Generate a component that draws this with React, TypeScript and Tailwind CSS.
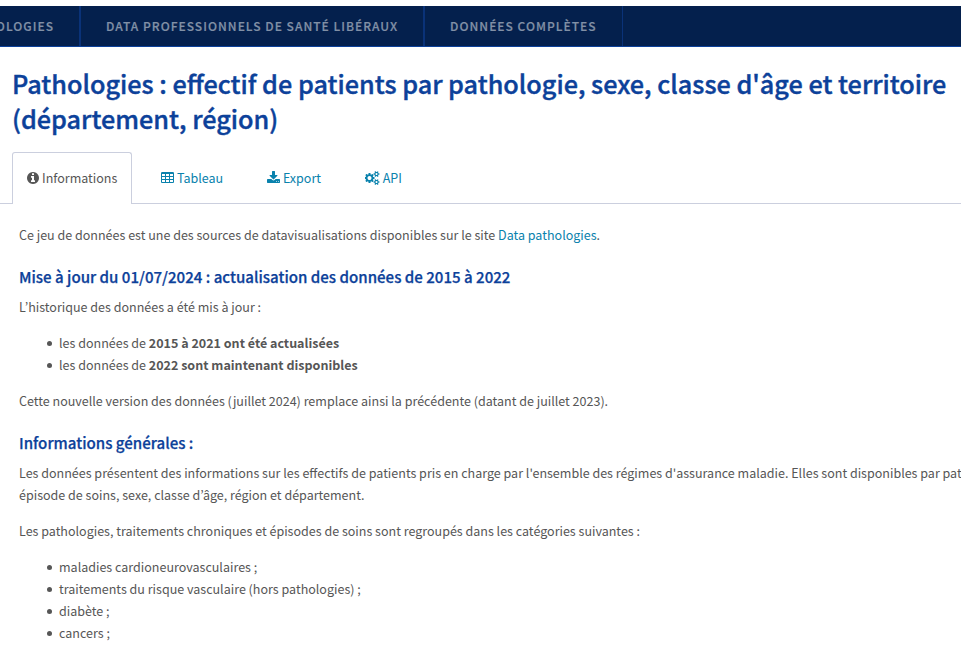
import React from "react";

const gear =
  "v140q0 16-149 31-12 27-30 52 51 113 51 138 0 4-4 7-122 71-124 71-8 0-46-47t-52-68q-20 2-30 2t-30-2q-14 21-52 68t-46 47q-2 0-124-71-4-3-4-7 0-25 51-138-18-25-30-52-149-15-149-31v-140q0-16 149-31 13-29 30-52-51-113-51-138 0-4 4-7 4-2 35-20t59-34 30-16q8 0 46 46.5t52 67.5q20-2 30-2t30 2q51-71 92-112l6-2q4 0 124 70 4 3 4 7 0 25-51 138 17 23 30 52 149 15 149 31z";

const cell =
  "v-192q0-14-9-23t-23-9h-320q-14 0-23 9t-9 23v192q0 14 9 23t23 9h320q14 0 23-9t9-23z";

const icons = {
  info: {
    width: 12,
    box: "0 0 1536 1792",
    d: "M1024 1376v-160q0-14-9-23t-23-9h-96v-512q0-14-9-23t-23-9h-320q-14 0-23 9t-9 23v160q0 14 9 23t23 9h96v320h-96q-14 0-23 9t-9 23v160q0 14 9 23t23 9h448q14 0 23-9t9-23zm-128-896v-160q0-14-9-23t-23-9h-192q-14 0-23 9t-9 23v160q0 14 9 23t23 9h192q14 0 23-9t9-23zm640 416q0 209-103 385.5t-279.5 279.5-385.5 103-385.5-103-279.5-279.5-103-385.5 103-385.5 279.5-279.5 385.5-103 385.5 103 279.5 279.5 103 385.5z",
  },
  table: {
    width: 13,
    box: "64 0 1664 1792",
    d:
      [576, 1088, 1600]
        .flatMap((x) => [1376, 992, 608].map((y) => `M${x} ${y}${cell}`))
        .join("") +
      "M1728 288v1088q0 66-47 113t-113 47h-1344q-66 0-113-47t-47-113v-1088q0-66 47-113t113-47h1344q66 0 113 47t47 113z",
  },
  download: {
    width: 13,
    box: "64 0 1664 1792",
    d: "M1344 1344q0-26-19-45t-45-19-45 19-19 45 19 45 45 19 45-19 19-45zm256 0q0-26-19-45t-45-19-45 19-19 45 19 45 45 19 45-19 19-45zm128-224v320q0 40-28 68t-68 28h-1472q-40 0-68-28t-28-68v-320q0-40 28-68t68-28h465l135 136q58 56 136 56t136-56l136-136h464q40 0 68 28t28 68zm-325-569q17 41-14 70l-448 448q-18 19-45 19t-45-19l-448-448q-31-29-14-70 17-39 59-39h256v-448q0-26 19-45t45-19h256q26 0 45 19t19 45v448h256q42 0 59 39z",
  },
  cogs: {
    width: 15,
    box: "0 0 1920 1792",
    d:
      "M832 896q0-106-75-181t-181-75-181 75-75 181 75 181 181 75 181-75 75-181zm768 512q0-52-38-90t-90-38-90 38-38 90q0 53 37.5 90.5t90.5 37.5 90.5-37.5 37.5-90.5zm0-1024q0-52-38-90t-90-38-90 38-38 90q0 53 37.5 90.5t90.5 37.5 90.5-37.5 37.5-90.5zm-384 421v185q0 10-7 19.5t-16 10.5l-155 24q-11 35-32 76 34 48 90 115 7 11 7 20 0 12-7 19-23 30-82.5 89.5t-78.5 59.5q-11 0-21-7l-115-90q-37 19-77 31-11 108-23 155-7 24-30 24h-186q-11 0-20-7.5t-10-17.5l-23-153q-34-10-75-31l-118 89q-7 7-20 7-11 0-21-8-144-133-144-160 0-9 7-19 10-14 41-53t47-61q-23-44-35-82l-152-24q-10-1-17-9.5t-7-19.5v-185q0-10 7-19.5t16-10.5l155-24q11-35 32-76-34-48-90-115-7-11-7-20 0-12 7-20 22-30 82-89t79-59q11 0 21 7l115 90q34-18 77-32 11-108 23-154 7-24 30-24h186q11 0 20 7.5t10 17.5l23 153q34 10 75 31l118-89q8-7 20-7 11 0 21 8 144 133 144 160 0 8-7 19-12 16-42 54t-45 60q23 48 34 82l152 23q10 2 17 10.5t7 19.5z" +
      `M1856 1338${gear}M1856 314${gear}`,
  },
};

function Icon({ name }: { name: keyof typeof icons }) {
  const icon = icons[name];
  return (
    <svg width={icon.width} height={14} viewBox={icon.box} fill="currentColor" fillRule="evenodd" className="shrink-0">
      <path d={icon.d} />
    </svg>
  );
}

function Tab({ icon, label, active }: { icon: keyof typeof icons; label: string; active?: boolean }) {
  return (
    <div
      className={
        active
          ? "flex h-[52px] w-[120px] shrink-0 items-center gap-[3px] rounded-t-[3px] border border-b-0 border-[#cbcfde] bg-white pb-px pl-[14px] text-[#565656]"
          : "flex h-[51px] items-center gap-[3px] px-[14px] text-[#0a82ad]"
      }
    >
      <Icon name={icon} />
      <span>{label}</span>
    </div>
  );
}

function Item({ children }: { children: React.ReactNode }) {
  return (
    <li className="flex items-center">
      <span className="mt-px mr-[7px] size-[5px] shrink-0 rounded-full bg-[#565656]" />
      <span>{children}</span>
    </li>
  );
}

function Bullets({ children }: { children: React.ReactNode }) {
  return <ul className="mb-[14px] pl-[28px]">{children}</ul>;
}

function Heading({ children }: { children: React.ReactNode }) {
  return (
    <h4 className="mt-5 mb-2 text-[15.08px] leading-[22px] font-medium text-[#0c419a] [-webkit-text-stroke:0.25px]">
      {children}
    </h4>
  );
}

export default function App() {
  return (
    <div className="h-[647px] w-[961px] overflow-hidden bg-white pt-[6px] font-['Noto_Sans_CJK_KR',sans-serif] text-[12.535px] leading-[22px] text-[#565656]">
      <nav className="flex h-[41px] border-b border-[#0c419a] bg-[#04204d] text-[12px] font-medium tracking-[1.02px] whitespace-nowrap text-[#8190a6] [-webkit-text-stroke:0.2px]">
        <div className="flex w-[81px] shrink-0 items-center justify-end border-r-2 border-[#0a3278] pr-[25px]">
          PATHOLOGIES
        </div>
        <div className="flex w-[344px] shrink-0 items-center border-r-2 border-[#0a3278] pl-[25px]">
          DATA PROFESSIONNELS DE SANTÉ LIBÉRAUX
        </div>
        <div className="flex w-[198px] shrink-0 items-center border-r border-[#0a3278] pl-[25px]">DONNÉES COMPLÈTES</div>
      </nav>
      <h1 className="mt-[19px] ml-3 h-[71px] text-[25.21px] leading-[35px] font-medium whitespace-nowrap text-[#0c419a] [-webkit-text-stroke:0.4px]">
        Pathologies : effectif de patients par pathologie, sexe, classe d'âge et territoire
        <br />
        (département, région)
      </h1>
      <div className="mt-[15px] flex h-[52px] items-start">
        <div className="h-full w-3 border-b border-[#cbcfde]" />
        <Tab icon="info" label="Informations" active />
        <div className="flex h-full flex-1 gap-[15.7px] border-b border-[#cbcfde] pl-[15px]">
          <Tab icon="table" label="Tableau" />
          <Tab icon="download" label="Export" />
          <Tab icon="cogs" label="API" />
        </div>
      </div>
      <main className="mt-5 ml-[19px] whitespace-nowrap">
        <p>
          Ce jeu de données est une des sources de datavisualisations disponibles sur le site{" "}
          <a className="text-[#0a82ad]">Data pathologies</a>.
        </p>
        <Heading>Mise à jour du 01/07/2024 : actualisation des données de 2015 à 2022</Heading>
        <p className="mb-[14px]">L’historique des données a été mis à jour :</p>
        <Bullets>
          <Item>
            les données de <b>2015 à 2021 ont été actualisées</b>
          </Item>
          <Item>
            les données de <b>2022 sont maintenant disponibles</b>
          </Item>
        </Bullets>
        <p>Cette nouvelle version des données (juillet 2024) remplace ainsi la précédente (datant de juillet 2023).</p>
        <Heading>Informations générales :</Heading>
        <p className="mb-[14px]">
          Les données présentent des informations sur les effectifs de patients pris en charge par l'ensemble des régimes
          d'assurance maladie. Elles sont disponibles par pathologie,
          <br />
          épisode de soins, sexe, classe d’âge, région et département.
        </p>
        <p className="mb-[14px]">
          Les pathologies, traitements chroniques et épisodes de soins sont regroupés dans les catégories suivantes :
        </p>
        <Bullets>
          <Item>maladies cardioneurovasculaires ;</Item>
          <Item>traitements du risque vasculaire (hors pathologies) ;</Item>
          <Item>diabète ;</Item>
          <Item>cancers ;</Item>
        </Bullets>
      </main>
    </div>
  );
}
